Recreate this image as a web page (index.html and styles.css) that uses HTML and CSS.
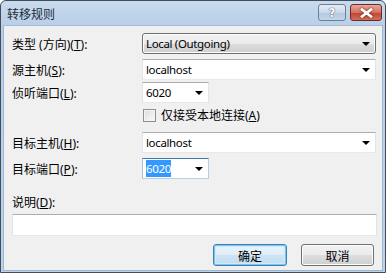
FILE: index.html
```html
<!DOCTYPE html>
<html>
<head>
<meta charset="utf-8">
<link rel="stylesheet" href="styles.css">
</head>
<body>
<div class="window">
  <div class="titlebar">
    <span class="title">转移规则</span>
    <div class="caption-buttons">
      <span class="cap-btn help">?</span>
      <span class="cap-btn close">
        <svg width="13" height="10" viewBox="0 0 13 10"><path d="M2 1.5 L11 8.5 M11 1.5 L2 8.5" stroke="#fff" stroke-width="2.6" stroke-linecap="square"/><path d="M2 1.5 L11 8.5 M11 1.5 L2 8.5" stroke="#fff" stroke-width="1.6"/></svg>
      </span>
    </div>
  </div>
  <div class="client">
    <div class="row r1">
      <label class="lbl">类型 (方向)(<u>T</u>):</label>
      <div class="combo list wide"><span class="val">Local (Outgoing)</span><span class="arrow"></span></div>
    </div>
    <div class="row r2">
      <label class="lbl">源主机(<u>S</u>):</label>
      <div class="combo edit wide"><span class="val">localhost</span><span class="arrow"></span></div>
    </div>
    <div class="row r3">
      <label class="lbl">侦听端口(<u>L</u>):</label>
      <div class="combo edit narrow"><span class="val">6020</span><span class="arrow"></span></div>
    </div>
    <div class="row r4">
      <span class="lbl"></span>
      <label class="check"><span class="box"></span><span>仅接受本地连接(<u>A</u>)</span></label>
    </div>
    <div class="row r5">
      <label class="lbl">目标主机(<u>H</u>):</label>
      <div class="combo edit wide"><span class="val">localhost</span><span class="arrow"></span></div>
    </div>
    <div class="row r6">
      <label class="lbl">目标端口(<u>P</u>):</label>
      <div class="combo edit narrow focus"><span class="val"><span class="sel">6020</span></span><span class="arrow"></span></div>
    </div>
    <div class="desc-label">说明(<u>D</u>):</div>
    <div class="textbox"></div>
    <div class="buttons">
      <button class="btn default">确定</button>
      <button class="btn">取消</button>
    </div>
  </div>
</div>
</body>
</html>
```
FILE: styles.css
```css
* { box-sizing: border-box; }
html, body { margin: 0; padding: 0; }
body {
  width: 386px;
  height: 273px;
  overflow: hidden;
  font-family: "Noto Sans", "Noto Sans CJK SC", sans-serif;
  font-size: 12px;
  color: #000;
  background: #fff;
}
.window {
  width: 386px;
  height: 273px;
  border: 1px solid #434d5a;
  border-radius: 6px 6px 0 0;
  background: linear-gradient(#c8daee, #b8cfe8 24px, #bcd3ec);
  display: flex;
  flex-direction: column;
}
.titlebar {
  height: 24px;
  display: flex;
  align-items: center;
  justify-content: space-between;
  padding: 0 3px 0 6px;
  flex: none;
}
.title {
  font-family: "Noto Sans CJK SC", sans-serif;
  font-size: 12px;
  color: #1e2a38;
  margin-top: 1px;
}
.caption-buttons {
  display: flex;
  gap: 4px;
  align-self: flex-start;
  margin-top: 3px;
}
.cap-btn {
  height: 17px;
  border-radius: 3px;
  display: flex;
  align-items: center;
  justify-content: center;
}
.help {
  width: 28px;
  border: 1px solid #6e7f93;
  background: linear-gradient(#e3ecf6, #c9d9ea 50%, #b3c8de 51%, #c4d6e9);
  color: #fff;
  font-family: "DejaVu Sans", sans-serif;
  font-weight: bold;
  font-size: 12px;
  text-shadow: 0 0 1px #3c4a5c, 0 0 1px #3c4a5c;
}
.close {
  width: 32px;
  border: 1px solid #6c2a22;
  background: linear-gradient(#e8a89c, #d5715f 50%, #c3432e 51%, #d0705a);
}
.close svg { filter: drop-shadow(0 0 1px #5a1a12); }
.client {
  flex: 1;
  margin: 0 2px 1px 2px;
  background: #f0f0f0;
  border: 1px solid #9fb6cf;
  border-top-color: #a8bcd3;
  padding: 7px 6px 0 8px;
  display: flex;
  flex-direction: column;
}
.row {
  display: flex;
  align-items: center;
}
.lbl {
  width: 130px;
  flex: none;
}
u { text-decoration-thickness: 1px; text-underline-offset: 1px; }
.r2 { margin-top: 5px; }
.r3 { margin-top: 2px; }
.r4 { margin-top: 5px; }
.r5 { margin-top: 10px; }
.r6 { margin-top: 5px; }
.combo {
  height: 21px;
  display: flex;
  align-items: center;
  justify-content: space-between;
  padding: 0 4px 0 3px;
}
.wide { width: 234px; }
.narrow { width: 67px; }
.combo.list {
  border: 1px solid #707070;
  border-radius: 3px;
  background: linear-gradient(#f2f2f2, #ebebeb 50%, #dddddd 51%, #cfcfcf);
  box-shadow: inset 0 0 0 1px #fcfcfc;
}
.combo.edit {
  background: #fff;
  border: 1px solid #e2e3ea;
  border-top-color: #abadb3;
  border-bottom-color: #e3e9ef;
}
.combo.focus {
  border: 1px solid #b5cfe7;
  border-top-color: #3d7bad;
  border-left-color: #a4c4e1;
}
.val {
  line-height: 15px;
  font-size: 11.5px;
  letter-spacing: -0.35px;
}
.sel {
  background: #3399ff;
  color: #fff;
  padding: 1px 0;
}
.arrow {
  width: 0;
  height: 0;
  border-left: 4px solid transparent;
  border-right: 4px solid transparent;
  border-top: 4px solid #000;
  margin-right: 1px;
}
.check {
  display: flex;
  align-items: center;
  gap: 5px;
  margin-left: 1px;
  height: 14px;
}
.box {
  width: 13px;
  height: 13px;
  border: 1px solid #8e8f8f;
  background: linear-gradient(135deg, #dcdcdc, #fbfbfb);
  box-shadow: inset 0 0 0 1px #f4f4f4;
}
.desc-label {
  margin-top: 17px;
  height: 14px;
  line-height: 14px;
}
.textbox {
  margin-top: 4px;
  width: 365px;
  height: 22px;
  background: #fff;
  border: 1px solid #e2e3ea;
  border-top-color: #abadb3;
  border-bottom-color: #e3e9ef;
}
.buttons {
  margin-top: 8px;
  display: flex;
  justify-content: flex-end;
  gap: 14px;
  padding-right: 2px;
}
.btn {
  width: 73px;
  height: 22px;
  border: 1px solid #707070;
  border-radius: 3px;
  background: linear-gradient(#f2f2f2, #ebebeb 50%, #dddddd 51%, #cfcfcf);
  box-shadow: inset 0 0 0 1px #fcfcfc;
  font-family: "Noto Sans CJK SC", sans-serif;
  font-size: 12px;
  padding: 0;
  color: #000;
}
.btn.default {
  width: 74px;
  border-color: #3c7fb1;
  background: linear-gradient(#eaf4fb, #dfedf8 50%, #cde3f3 51%, #c2dcf0);
  box-shadow: inset 0 0 0 1px #7cc6f0, inset 0 0 0 2px #c9ebfd;
}
```
